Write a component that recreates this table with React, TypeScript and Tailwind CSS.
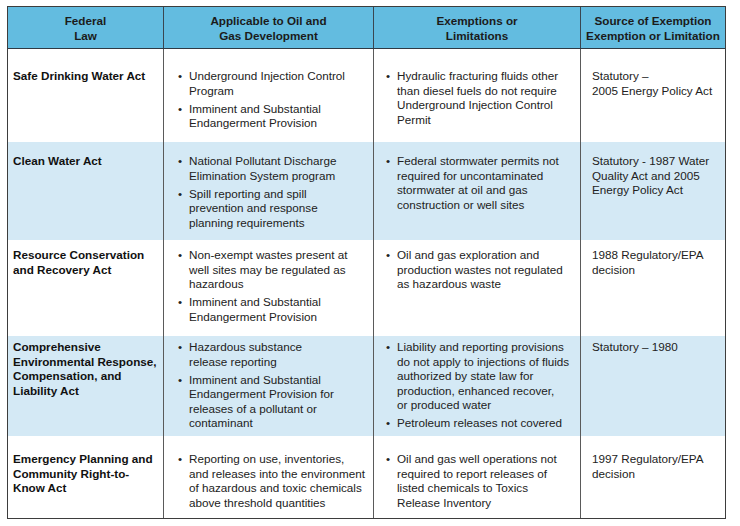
import React from "react";

type Row = {
  law: string[];
  app: string[][];
  ex: string[][];
  src: string[];
  h: string;
  pt: string;
  bg: string;
};

const rows: Row[] = [
  {
    law: ["Safe Drinking Water Act"],
    app: [["Underground Injection Control", "Program"], ["Imminent and Substantial", "Endangerment Provision"]],
    ex: [["Hydraulic fracturing fluids other", "than diesel fuels do not require", "Underground Injection Control", "Permit"]],
    src: ["Statutory \u2013", "2005 Energy Policy Act"],
    h: "h-[93px]",
    pt: "pt-[20px]",
    bg: "bg-white",
  },
  {
    law: ["Clean Water Act"],
    app: [["National Pollutant Discharge", "Elimination System program"], ["Spill reporting and spill", "prevention and response", "planning requirements"]],
    ex: [["Federal stormwater permits not", "required for uncontaminated", "stormwater at oil and gas", "construction or well sites"]],
    src: ["Statutory - 1987 Water", "Quality Act and 2005", "Energy Policy Act"],
    h: "h-[98px]",
    pt: "pt-[12px]",
    bg: "bg-[#d4e9f5]",
  },
  {
    law: ["Resource Conservation", "and Recovery Act"],
    app: [["Non-exempt wastes present at", "well sites may be regulated as", "hazardous"], ["Imminent and Substantial", "Endangerment Provision"]],
    ex: [["Oil and gas exploration and", "production wastes not regulated", "as hazardous waste"]],
    src: ["1988 Regulatory/EPA", "decision"],
    h: "h-[96px]",
    pt: "pt-[8px]",
    bg: "bg-white",
  },
  {
    law: ["Comprehensive", "Environmental Response,", "Compensation, and", "Liability Act"],
    app: [["Hazardous substance", "release reporting"], ["Imminent and Substantial", "Endangerment Provision for", "releases of a pollutant or", "contaminant"]],
    ex: [["Liability and reporting provisions", "do not apply to injections of fluids", "authorized by state law for", "production, enhanced recover,", "or produced water"], ["Petroleum releases not covered"]],
    src: ["Statutory \u2013 1980"],
    h: "h-[100px]",
    pt: "pt-[4px]",
    bg: "bg-[#d4e9f5]",
  },
  {
    law: ["Emergency Planning and", "Community Right-to-", "Know Act"],
    app: [["Reporting on use, inventories,", "and releases into the environment", "of hazardous and toxic chemicals", "above threshold quantities"]],
    ex: [["Oil and gas well operations not", "required to report releases of", "listed chemicals to Toxics", "Release Inventory"]],
    src: ["1997 Regulatory/EPA", "decision"],
    h: "h-[82px]",
    pt: "pt-[16px]",
    bg: "bg-white",
  },
];

function Lines({ lines }: { lines: string[] }) {
  return (
    <>
      {lines.map((l, i) => (
        <div key={i} className="whitespace-nowrap">
          {l}
        </div>
      ))}
    </>
  );
}

function Bullets({ items, bulletPad }: { items: string[][]; bulletPad: string }) {
  return (
    <div className={`flex flex-col gap-[3.5px] ${bulletPad}`}>
      {items.map((it, i) => (
        <div key={i} className="flex">
          <div className="w-[11px] shrink-0">•</div>
          <div>
            <Lines lines={it} />
          </div>
        </div>
      ))}
    </div>
  );
}

export default function App() {
  return (
    <div
      className="w-[740px] h-[526px] bg-white pt-[6px] pl-[7px] text-[11.7px] leading-[14.5px] text-[#222]"
      style={{ fontFamily: '"Liberation Sans", Arial, sans-serif' }}
    >
      <div className="w-[719px] border border-[#3d3d3d]">
        <div className="grid grid-cols-[155px_210px_207px_145px] h-[42px] bg-[#63bce0] border-b border-[#2f3a44] font-bold text-[#1b1b1b] leading-[15px]">
          <div className="flex items-center justify-center text-center">
            <div>
              Federal
              <br />
              Law
            </div>
          </div>
          <div className="flex items-center justify-center text-center border-l border-[#3a4650]">
            <div>
              Applicable to Oil and
              <br />
              Gas Development
            </div>
          </div>
          <div className="flex items-center justify-center text-center border-l border-[#3a4650]">
            <div>
              Exemptions or
              <br />
              Limitations
            </div>
          </div>
          <div className="flex items-center justify-center text-center border-l border-[#3a4650]">
            <div>
              Source of Exemption
              <br />
              Exemption or Limitation
            </div>
          </div>
        </div>
        {rows.map((r, i) => (
          <div key={i} className={`grid grid-cols-[155px_210px_207px_145px] ${r.h} ${r.bg}`}>
            <div className={`${r.pt} pl-[5px] font-bold text-[#111]`}>
              <Lines lines={r.law} />
            </div>
            <div className={`${r.pt} border-l border-[#5a5a5a]`}>
              <Bullets items={r.app} bulletPad="pl-[14px]" />
            </div>
            <div className={`${r.pt} border-l border-[#5a5a5a]`}>
              <Bullets items={r.ex} bulletPad="pl-[12px]" />
            </div>
            <div className={`${r.pt} pl-[11px] border-l border-[#5a5a5a]`}>
              <Lines lines={r.src} />
            </div>
          </div>
        ))}
      </div>
    </div>
  );
}
